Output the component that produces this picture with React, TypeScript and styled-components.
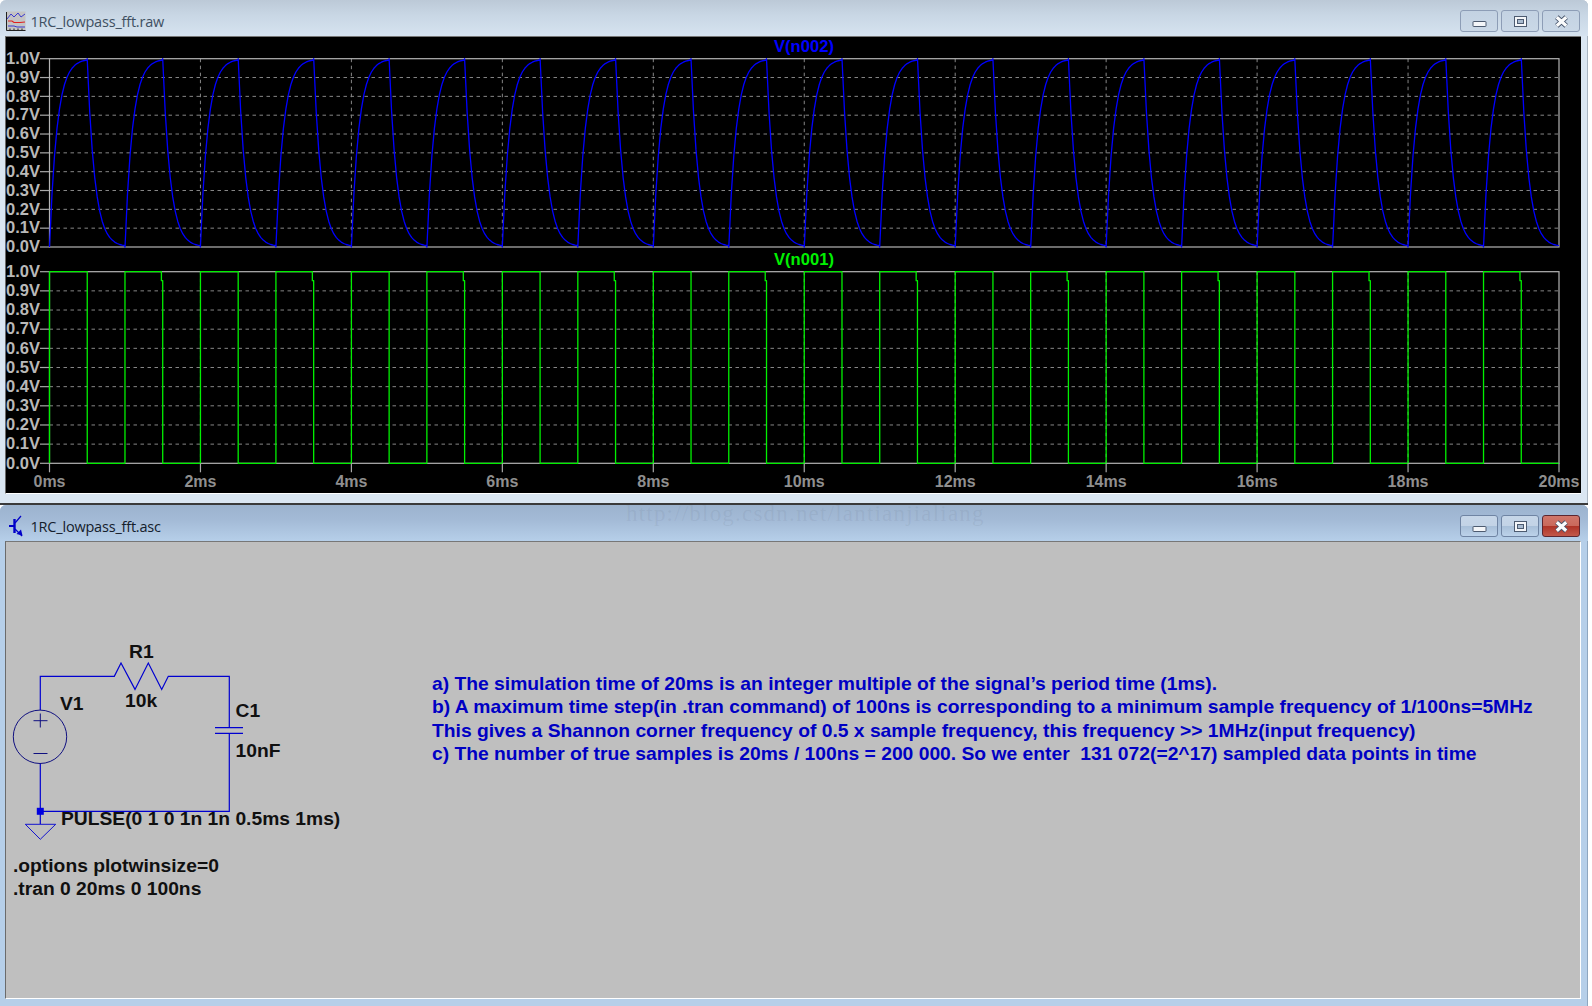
import React from 'react';
import styled, { createGlobalStyle, css } from 'styled-components';

const GlobalStyle = createGlobalStyle`
    html, body {
        margin: 0;
        padding: 0;
        background: #fff;
        overflow: hidden;
    }
`;

const Desktop = styled.div`
    width: 1592px;
    height: 1006px;
    display: flex;
    flex-direction: column;
`;

const Window = styled.section<{ $active?: boolean; $height: number }>`
    position: relative;
    box-sizing: border-box;
    width: 1588px;
    height: ${p => p.$height}px;
    display: flex;
    flex-direction: column;
    border-radius: 6px 6px 0 0;
    background: ${p => (p.$active ? '#b6cfe9' : '#dae6f2')};
    box-shadow: inset -1px 0 0 ${p => (p.$active ? '#8ea6c0' : '#a9b5c2')};
`;

const TitleBar = styled.header<{ $active?: boolean }>`
    box-sizing: border-box;
    height: 36px;
    display: flex;
    align-items: center;
    padding: ${p => (p.$active ? '6px 8px 0 8px' : '6px 8px 0 6px')};
    border-radius: 6px 6px 0 0;
    background: ${p =>
        p.$active
            ? 'linear-gradient(#9cb3ce, #a3bad6 40%, #b6cfe9)'
            : 'linear-gradient(#bcc9d7, #c8d6e4 40%, #d6e3f0)'};
`;

const TitleText = styled.span<{ $active?: boolean }>`
    margin-left: ${p => (p.$active ? '6.5px' : '4.5px')};
    font: 14.5px 'Open Sans', 'Noto Sans', sans-serif;
    letter-spacing: -0.2px;
    color: ${p => (p.$active ? '#14202c' : '#3f5062')};
`;

const Watermark = styled.span`
    position: absolute;
    left: 626px;
    top: -4px;
    font: 23px 'Liberation Serif', serif;
    letter-spacing: 1.2px;
    color: rgba(90, 100, 120, 0.1);
    pointer-events: none;
`;

const Controls = styled.div`
    margin-left: auto;
    display: flex;
    gap: 3px;
`;

const glass = css`
    background: linear-gradient(#c6d6e8 0%, #c3d3e6 48%, #a8bfd8 50%, #bcd2ea 100%);
    border-color: #6f84a3;
`;

const CaptionButton = styled.div<{ $active?: boolean; $close?: boolean }>`
    box-sizing: border-box;
    width: 38px;
    height: 22px;
    display: flex;
    align-items: center;
    justify-content: center;
    border: 1px solid #8d9db6;
    border-radius: 3px;
    background: linear-gradient(#c3d2e2, #cad8e7);
    ${p => p.$active && glass}
    ${p =>
        p.$close &&
        css`
            background: linear-gradient(#d0766a 0%, #c9695c 48%, #ae3226 50%, #c2584a 100%);
            border-color: #5c2630;
        `}
`;

const Client = styled.div<{ $dark?: boolean }>`
    box-sizing: border-box;
    margin-left: 5px;
    width: 1576px;
    background: ${p => (p.$dark ? '#000' : '#bfbfbf')};
    border-top: 1px solid #777;
    border-left: 1px solid #6b6b6b;
`;

const PlotClient = styled(Client)`
    height: 458px;
    border-bottom: 1px solid #fff;
`;

const SchematicClient = styled(Client)`
    height: 458px;
    display: flex;
    align-items: flex-start;
    border-bottom: 1px solid #fff;
    border-right: 1px solid #fff;
`;

const Divider = styled.div`
    flex: none;
    width: 1588px;
    height: 2px;
    background: #3a3a3a;
`;

const PlotSvg = styled.svg`
    display: block;
`;

const AxisText = styled.text<{ $color: string; $size?: number }>`
    font-family: 'Liberation Sans', Arial, sans-serif;
    font-weight: 700;
    font-size: ${p => p.$size ?? 16}px;
    fill: ${p => p.$color};
`;

const SchematicSvg = styled.svg`
    flex: none;
    display: block;
`;

const PartText = styled.text`
    font-family: 'Liberation Sans', Arial, sans-serif;
    font-weight: 700;
    font-size: 19.25px;
    fill: #101010;
`;

const Notes = styled.div`
    margin: 130px 0 0 54px;
    font: 700 19.27px/23.3px 'Liberation Sans', Arial, sans-serif;
    color: #0000c4;
    white-space: pre;
`;

const MinWrap = styled.span`
    display: flex;
    margin-top: 6px;
`;

const X0 = 49.5;
const X1 = 1559;
const HALF = (X1 - X0) / 40;
const TAU = HALF / 5;

// exponential charge and discharge of the RC, sampled about every 2.5px
const lowpassPath = (top: number, bottom: number) => {
    const h = bottom - top;
    const pts: string[] = [`${X0},${bottom}`];
    for (let k = 0; k < 40; k++) {
        const start = X0 + k * HALF;
        const rising = k % 2 === 0;
        for (let t = 0; t <= HALF + 0.01; t += 2.5) {
            const e = Math.exp(-t / TAU);
            const v = rising ? 1 - e : e;
            pts.push(`${(start + t).toFixed(1)},${(bottom - v * h).toFixed(1)}`);
        }
    }
    return 'M' + pts.join('L');
};

const pulsePath = (top: number, bottom: number) => {
    const pts: string[] = [`${X0},${bottom}`, `${X0},${top}`];
    for (let k = 1; k <= 40; k++) {
        const x = X0 + k * HALF;
        if (k % 2 === 1) {
            if (k % 4 === 3) {
                pts.push(`${x - 1.3},${top}`, `${x - 1.3},${top + 9}`, `${x},${top + 9}`);
            } else {
                pts.push(`${x},${top}`);
            }
            pts.push(`${x},${bottom}`);
        } else {
            pts.push(`${x},${bottom}`);
            if (k < 40) pts.push(`${x},${top}`);
        }
    }
    return 'M' + pts.join('L');
};

type PlotProps = {
    label: string,
    labelY: number,
    color: string,
    top: number,
    bottom: number,
    trace: string,
    axis?: boolean
}

const Plot = ({ label, labelY, color, top, bottom, trace, axis }: PlotProps) => {
    const step = (bottom - top) / 10;
    const majors = Array.from({ length: 11 }, (_, i) => i);
    return (
        <g>
            <AxisText x={804} y={labelY} textAnchor="middle" $color={color} $size={16.6}>{label}</AxisText>
            {majors.map(i => {
                const y = top + i * step;
                return (
                    <g key={i}>
                        <AxisText x={40} y={y + 5.2} textAnchor="end" $color="#b9b9b9" $size={16.5}>{((10 - i) / 10).toFixed(1)}V</AxisText>
                        <line x1={40} x2={X0} y1={y} y2={y} stroke="#a8a8a8" strokeWidth={1.2} />
                        {i > 0 && i < 10 && (
                            <line x1={X0} x2={X1} y1={y} y2={y} stroke="#868686" strokeWidth={1} strokeDasharray="3.5 3.5" />
                        )}
                    </g>
                );
            })}
            {Array.from({ length: 9 }, (_, i) => X0 + (i + 1) * 2 * HALF * 2).map(x => (
                <line key={x} x1={x} x2={x} y1={top} y2={bottom} stroke="#868686" strokeWidth={1} strokeDasharray="3.5 3.5" />
            ))}
            <rect x={X0} y={top} width={X1 - X0} height={bottom - top} fill="none" stroke="#b4b4b4" strokeWidth={1.2} />
            <path d={trace} fill="none" stroke={color} strokeWidth={1.3} strokeLinejoin="round" />
            {axis && Array.from({ length: 11 }, (_, i) => i).map(i => {
                const x = X0 + i * 4 * HALF;
                return (
                    <g key={i}>
                        <line x1={x} x2={x} y1={bottom} y2={bottom + 9} stroke="#a8a8a8" strokeWidth={1.2} />
                        <AxisText x={x} y={bottom + 24} textAnchor="middle" $color="#8f8f8f">{i * 2}ms</AxisText>
                    </g>
                );
            })}
        </g>
    );
};

const WaveformView = () => (
    <PlotSvg width={1574} height={456} viewBox="6 37 1574 456">
        <Plot label="V(n002)" labelY={51.5} color="#0000ff" top={58.7} bottom={247} trace={lowpassPath(58.7, 247)} />
        <Plot label="V(n001)" labelY={264.5} color="#00f000" top={271.7} bottom={463.3} trace={pulsePath(271.7, 463.3)} axis />
    </PlotSvg>
);

const Schematic = () => (
    <SchematicSvg width={372} height={456} viewBox="6 542 372 456">
        <g fill="none" stroke="#0000d0" strokeWidth={1.2}>
            <path d="M40.3 710V676.3H114.3L121 663L135 689.4L148.3 663L161.7 689.4L168.3 676.3H229.3V728M229.3 734V811.3H40.3V763.5" />
            <path d="M215 727.7H243M215 733.3H243" />
            <path d="M40.3 811V824" />
            <path d="M25.3 824.3H55.7L40.3 839.3Z" strokeWidth={0.9} />
        </g>
        <rect x={36.8} y={807.8} width={7} height={7} fill="#0000e0" />
        <g fill="none" stroke="#101080" strokeWidth={1}>
            <circle cx={40} cy={736.8} r={26.7} />
            <path d="M40.3 713.5V727.5M33.5 720.7H47.5M33.5 753.5H47.5" />
        </g>
        <PartText x={60} y={710}>V1</PartText>
        <PartText x={129} y={658.3}>R1</PartText>
        <PartText x={125} y={707.3}>10k</PartText>
        <PartText x={235.5} y={717.3}>C1</PartText>
        <PartText x={235.5} y={757.3}>10nF</PartText>
        <PartText x={61} y={825}>PULSE(0 1 0 1n 1n 0.5ms 1ms)</PartText>
        <PartText x={13} y={871.7}>.options plotwinsize=0</PartText>
        <PartText x={13} y={895}>.tran 0 20ms 0 100ns</PartText>
    </SchematicSvg>
);

const ChartIcon = () => (
    <svg width="20" height="20" viewBox="0 0 20 20">
        <rect x="0.5" y="0.5" width="19" height="19" fill="#c4c4c4" />
        <path d="M1 8L5 3L8 6L12 2L15 6L19 3" fill="none" stroke="#3a3ad0" />
        <path d="M2 10H6L8 11.5H14L19 11" fill="none" stroke="#e02020" strokeWidth="1.2" />
        <path d="M2 15H8L11 16H19" fill="none" stroke="#3a3ad0" />
        <path d="M0.5 1V19.5H19.5" fill="none" stroke="#222" />
        <path d="M4 17.5V20M8 17.5V20M12 17.5V20M16 17.5V20" stroke="#222" />
    </svg>
);

const TransistorIcon = () => (
    <svg width="16" height="22" viewBox="0 0 16 22">
        <path d="M1 11H6" stroke="#0000c8" strokeWidth="2" />
        <path d="M6.5 4V18" stroke="#0000c8" strokeWidth="2.4" />
        <path d="M7 8L13 1" stroke="#0000c8" strokeWidth="1.2" fill="none" />
        <path d="M7 14L14 21" stroke="#0000c8" strokeWidth="1.2" fill="none" />
        <path d="M14.5 20.5L8.5 19L13 14.5Z" fill="#0000c8" />
    </svg>
);

const MinGlyph = () => (
    <MinWrap>
        <svg width="15" height="8" viewBox="0 0 15 8">
            <rect x="1" y="1.5" width="13" height="5" rx="0.5" fill="#f4f6f9" stroke="#4d5b70" />
        </svg>
    </MinWrap>
);

const MaxGlyph = () => (
    <svg width="15" height="13" viewBox="0 0 15 13">
        <rect x="1.5" y="1.5" width="12" height="10" fill="#f4f6f9" stroke="#4d5b70" />
        <rect x="4.5" y="4.5" width="6" height="4" fill="#a9bbd0" stroke="#4d5b70" />
    </svg>
);

const CloseGlyph = () => (
    <svg width="15" height="13" viewBox="0 0 15 13">
        <path d="M2.8 2.2L12.2 10.8M12.2 2.2L2.8 10.8" stroke="#45536a" strokeWidth="5" />
        <path d="M2.8 2.2L12.2 10.8M12.2 2.2L2.8 10.8" stroke="#fafbfc" strokeWidth="3.2" />
    </svg>
);

const Caption = ({ active }: { active?: boolean }) => (
    <Controls>
        <CaptionButton $active={active}><MinGlyph /></CaptionButton>
        <CaptionButton $active={active}><MaxGlyph /></CaptionButton>
        <CaptionButton $active={active} $close={active}><CloseGlyph /></CaptionButton>
    </Controls>
);

const App = () => (
    <Desktop>
        <GlobalStyle />
        <Window $height={503}>
            <TitleBar>
                <ChartIcon />
                <TitleText>1RC_lowpass_fft.raw</TitleText>
                <Caption />
            </TitleBar>
            <PlotClient $dark>
                <WaveformView />
            </PlotClient>
        </Window>
        <Divider />
        <Window $height={501} $active>
            <TitleBar $active>
                <TransistorIcon />
                <TitleText $active>1RC_lowpass_fft.asc</TitleText>
                <Watermark>http://blog.csdn.net/lantianjialiang</Watermark>
                <Caption active />
            </TitleBar>
            <SchematicClient>
                <Schematic />
                <Notes>{`a) The simulation time of 20ms is an integer multiple of the signal’s period time (1ms).
b) A maximum time step(in .tran command) of 100ns is corresponding to a minimum sample frequency of 1/100ns=5MHz
This gives a Shannon corner frequency of 0.5 x sample frequency, this frequency >> 1MHz(input frequency)
c) The number of true samples is 20ms / 100ns = 200 000. So we enter  131 072(=2^17) sampled data points in time`}</Notes>
            </SchematicClient>
        </Window>
    </Desktop>
);

export default App;
